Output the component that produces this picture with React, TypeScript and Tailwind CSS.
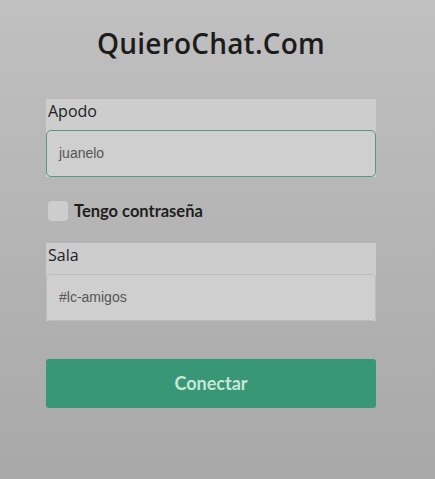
export default function App() {
  return (
    <div className="w-[435px] h-[479px] bg-gradient-to-b from-[#c1c0c0] to-[#a9a8a8] font-['Open_Sans',sans-serif]">
      <div className="ml-[46px] w-[330px] flex flex-col">
        <h1 className="mt-[23px] h-[40px] text-center text-[28px] leading-[40px] font-semibold text-[#1c1c1c] tracking-[0.2px]">
          QuieroChat.Com
        </h1>

        <div className="mt-[36px] bg-[#cdcdcd]">
          <div className="h-[31px] pl-[2px] text-[16px] leading-[24px] text-[#222]">Apodo</div>
          <div className="h-[47px] rounded-[5px] border border-[#579a7f] bg-[#cfcfcf] flex items-center pl-[12px] font-['Liberation_Sans',sans-serif] text-[14px] text-[#555]">
            juanelo
          </div>
        </div>

        <label className="mt-[24px] h-[20px] flex items-center gap-[6px] pl-[2px]">
          <span className="w-[20px] h-[20px] rounded-[4px] bg-[#cdcdcd]" />
          <span className="font-['Lato',sans-serif] font-bold text-[16.5px] text-[#1e1e1e]">Tengo contraseña</span>
        </label>

        <div className="mt-[22px] bg-[#cdcdcd]">
          <div className="h-[31px] pl-[2px] text-[16px] leading-[24px] text-[#222]">Sala</div>
          <div className="h-[47px] rounded-[4px] border border-[#bdbdbd] bg-[#cfcfcf] flex items-center pl-[12px] font-['Liberation_Sans',sans-serif] text-[14px] text-[#555]">
            #lc-amigos
          </div>
        </div>

        <button className="mt-[38px] h-[49px] w-full rounded-[3px] bg-[#379777] font-['Lato',sans-serif] font-bold text-[18px] text-[#c8e6d9]">
          Conectar
        </button>
      </div>
    </div>
  );
}
